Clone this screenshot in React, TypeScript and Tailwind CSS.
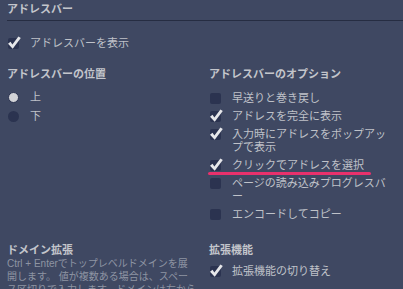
import React from "react";

function Check({ checked }: { checked: boolean }) {
  return (
    <span className="relative mt-[1px] block h-[11px] w-[11px] shrink-0 rounded-[2px] bg-[#2b3350]">
      {checked && (
        <svg
          className="absolute left-[-1px] top-[-2px]"
          width="14"
          height="14"
          viewBox="0 0 14 14"
        >
          <polygon
            points="1.0,7.8 3.5,5.8 5.4,8.4 11.4,0.4 13.8,2.0 5.7,12.8"
            fill="#e6e7ea"
          />
        </svg>
      )}
    </span>
  );
}

function CheckItem({
  checked,
  children,
  mark,
}: {
  checked: boolean;
  children: React.ReactNode;
  mark?: boolean;
}) {
  return (
    <div className="relative flex items-start gap-[11px] pl-[1px] text-[11px] leading-[13px] text-[#bfc2c9]">
      <Check checked={checked} />
      <div className="whitespace-nowrap">{children}</div>
      {mark && (
        <div className="absolute left-[-1px] top-[13px] h-[2.5px] w-[163px] rounded-full bg-[#e8316c]" />
      )}
    </div>
  );
}

function Radio({ selected, label }: { selected: boolean; label: string }) {
  return (
    <div className="flex items-center gap-[11px] pl-[1px] text-[11px] leading-[13px] text-[#bfc2c9]">
      {selected ? (
        <span className="block h-[11px] w-[11px] rounded-full border border-[#2b3350] bg-[#d2d3d7]" />
      ) : (
        <span className="block h-[11px] w-[11px] rounded-full bg-[#2b3350]" />
      )}
      <span>{label}</span>
    </div>
  );
}

function Heading({ children }: { children: React.ReactNode }) {
  return (
    <div className="text-[11px] font-bold leading-[14px] text-[#c3c5cb]">
      {children}
    </div>
  );
}

export default function App() {
  return (
    <div
      className="h-[289px] w-[403px] overflow-hidden bg-[#3f4862] pl-[7px]"
      style={{ fontFamily: '"Liberation Sans", "Noto Sans CJK JP", sans-serif' }}
    >
      <div className="h-[21px] border-b border-[#262d42] pt-[2px]">
        <Heading>アドレスバー</Heading>
      </div>

      <div className="mt-[16px]">
        <CheckItem checked>アドレスバーを表示</CheckItem>
      </div>

      <div className="mt-[17px] grid grid-cols-[202px_1fr]">
        <div>
          <Heading>アドレスバーの位置</Heading>
          <div className="mt-[10px] flex flex-col gap-[6px]">
            <Radio selected label="上" />
            <Radio selected={false} label="下" />
          </div>
        </div>
        <div>
          <Heading>アドレスバーのオプション</Heading>
          <div className="mt-[11px] flex flex-col gap-[5px]">
            <CheckItem checked={false}>早送りと巻き戻し</CheckItem>
            <CheckItem checked>アドレスを完全に表示</CheckItem>
            <CheckItem checked>
              入力時にアドレスをポップアッ
              <br />
              プで表示
            </CheckItem>
            <CheckItem checked mark>
              クリックでアドレスを選択
            </CheckItem>
            <CheckItem checked={false}>
              ページの読み込みプログレスバ
              <br />ー
            </CheckItem>
            <CheckItem checked={false}>エンコードしてコピー</CheckItem>
          </div>
        </div>
      </div>

      <div className="mt-[22px] grid grid-cols-[202px_1fr]">
        <div>
          <Heading>ドメイン拡張</Heading>
          <div className="whitespace-nowrap text-[10px] leading-[13px] text-[#8e94a3]">
            Ctrl + Enterでトップレベルドメインを展
            <br />
            開します。 値が複数ある場合は、スペー
            <br />
            ス区切りで入力します。ドメインは左から
          </div>
        </div>
        <div>
          <Heading>拡張機能</Heading>
          <div className="mt-[8px]">
            <CheckItem checked>拡張機能の切り替え</CheckItem>
          </div>
        </div>
      </div>
    </div>
  );
}
